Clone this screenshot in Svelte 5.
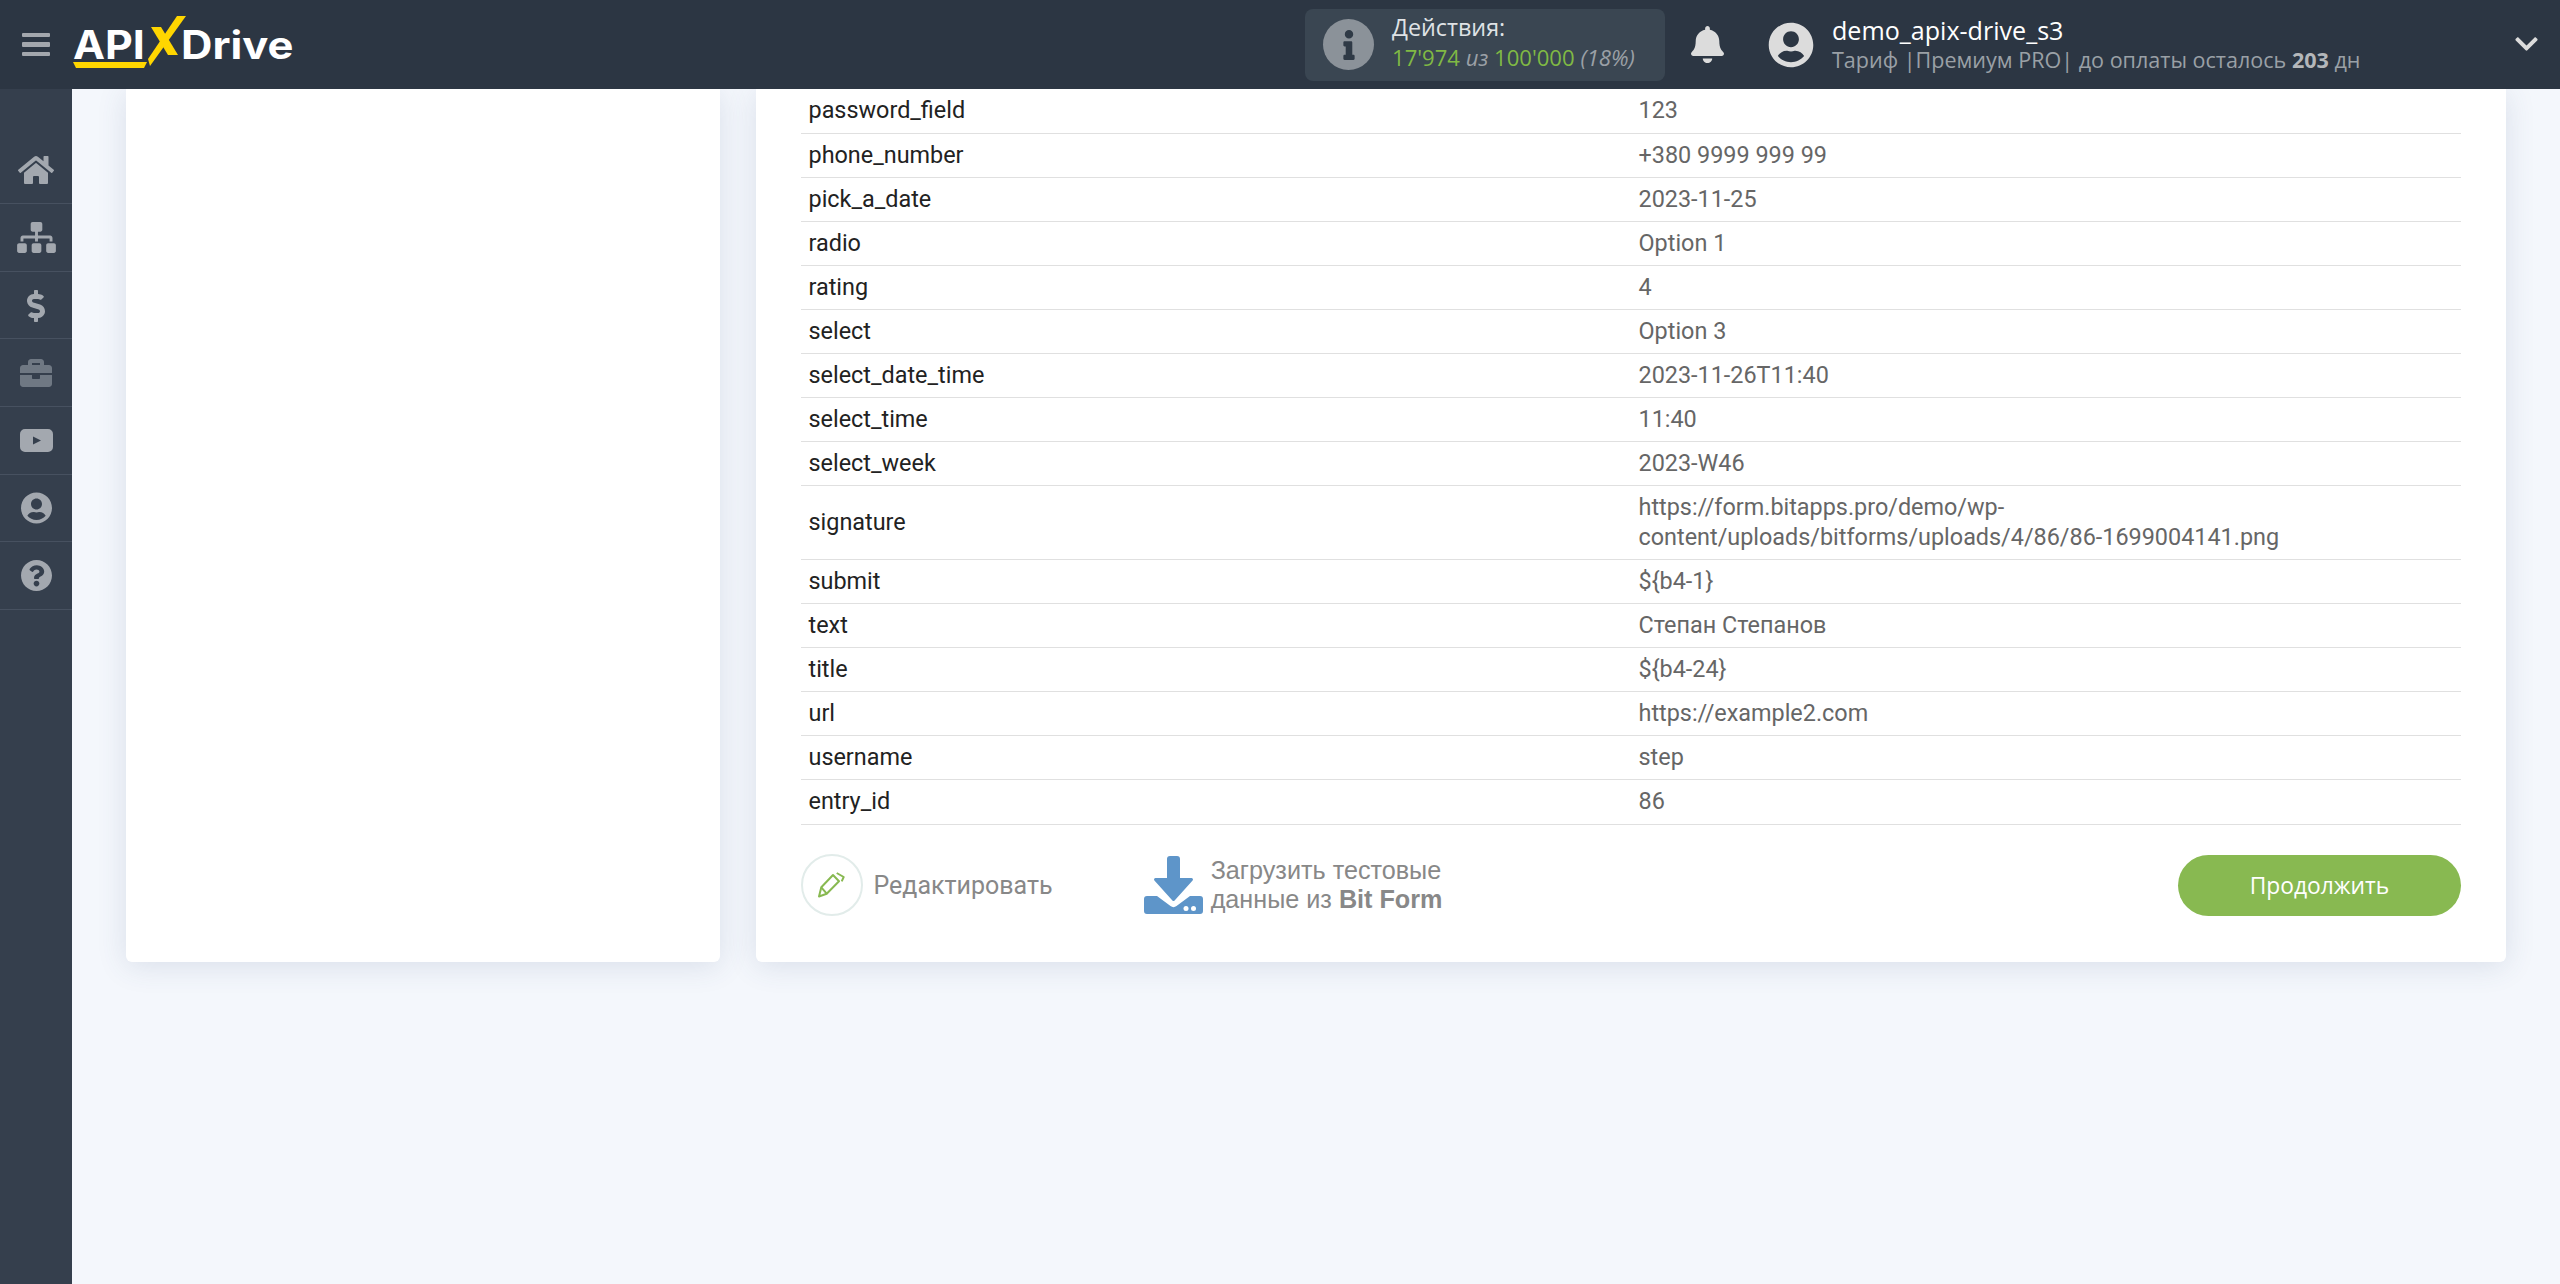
<script>
  const rows = [
    ['password_field', '123'],
    ['phone_number', '+380 9999 999 99'],
    ['pick_a_date', '2023-11-25'],
    ['radio', 'Option 1'],
    ['rating', '4'],
    ['select', 'Option 3'],
    ['select_date_time', '2023-11-26T11:40'],
    ['select_time', '11:40'],
    ['select_week', '2023-W46'],
    ['signature', 'https://form.bitapps.pro/demo/wp-\ncontent/uploads/bitforms/uploads/4/86/86-1699004141.png'],
    ['submit', '${b4-1}'],
    ['text', 'Степан Степанов'],
    ['title', '${b4-24}'],
    ['url', 'https://example2.com'],
    ['username', 'step'],
    ['entry_id', '86']
  ];
</script>

<div class="page">
  <header class="topbar">
    <button class="burger" aria-label="menu"><i></i><i></i><i></i></button>
    <div class="logo">
      <span class="api">API</span>
      <svg class="logo-x" viewBox="0 0 40 54" width="40" height="54" aria-hidden="true">
        <polygon points="4,11 14,11 31,39 21,39" fill="#ffd600"/>
        <polygon points="30,0 39,0 3,50 1,43" fill="#ffd600"/>
      </svg>
      <span class="drive">Drive</span>
      <svg class="logo-line" viewBox="0 0 74 7" width="74" height="7" aria-hidden="true">
        <polygon points="0,0 74,0 71,6 3,6" fill="#ffd600"/>
      </svg>
    </div>

    <div class="actions">
      <span class="info-disc">
        <svg viewBox="0 0 192 512" width="12" height="30" aria-hidden="true"><path fill="#2f3a46" d="M20 424.229h20V279.771H20c-11.046 0-20-8.954-20-20V212c0-11.046 8.954-20 20-20h112c11.046 0 20 8.954 20 20v212.229h20c11.046 0 20 8.954 20 20V492c0 11.046-8.954 20-20 20H20c-11.046 0-20-8.954-20-20v-47.771c0-11.046 8.954-20 20-20zM96 0C56.235 0 24 32.235 24 72s32.235 72 72 72 72-32.235 72-72S135.764 0 96 0z"/></svg>
      </span>
      <div class="actions-text">
        <div class="a-title">Действия:</div>
        <div class="a-count"><b>17'974</b> <em>из</em> <b>100'000</b> <em class="pct">(18%)</em></div>
      </div>
    </div>

    <svg class="bell" viewBox="0 0 448 512" width="33" height="37" preserveAspectRatio="none" aria-hidden="true"><path fill="#dcdcdc" d="M224 512c35.32 0 63.97-28.65 63.97-64H160.03c0 35.35 28.65 64 63.97 64zm215.39-149.71c-19.32-20.76-55.47-51.99-55.47-154.29 0-77.7-54.48-139.9-127.94-155.16V32c0-17.67-14.32-32-31.98-32s-31.98 14.33-31.98 32v20.84C118.56 68.1 64.08 130.3 64.08 208c0 102.3-36.15 133.53-55.47 154.29-6 6.45-8.66 14.16-8.61 21.71.11 16.4 12.98 32 32.1 32h383.8c19.12 0 32-15.6 32.1-32 .05-7.55-2.61-15.27-8.61-21.71z"/></svg>

    <svg class="avatar" viewBox="0 0 496 512" width="46" height="46" aria-hidden="true"><path fill="#dcdcdc" d="M248 8C111 8 0 119 0 256s111 248 248 248 248-111 248-248S385 8 248 8zm0 96c48.6 0 88 39.4 88 88s-39.4 88-88 88-88-39.4-88-88 39.4-88 88-88zm0 344c-58.7 0-111.3-26.6-146.5-68.2 18.8-35.4 55.6-59.8 98.5-59.8 2.4 0 4.8.4 7.1 1.1 13 4.2 26.6 6.9 40.9 6.9 14.3 0 28-2.7 40.9-6.9 2.3-.7 4.7-1.1 7.1-1.1 42.9 0 79.7 24.4 98.5 59.8C359.3 421.4 306.7 448 248 448z"/></svg>

    <div class="account">
      <div class="acc-name">demo_apix-drive_s3</div>
      <div class="acc-plan">Тариф |Премиум PRO| до оплаты осталось <b>203</b> дн</div>
    </div>

    <svg class="chev" viewBox="0 0 448 512" width="23" height="26" aria-hidden="true"><path fill="#dcdcdc" d="M207.029 381.476L12.686 187.132c-9.373-9.373-9.373-24.569 0-33.941l22.667-22.667c9.357-9.357 24.522-9.375 33.901-.04L224 284.505l154.745-154.021c9.379-9.335 24.544-9.317 33.901.04l22.667 22.667c9.373 9.373 9.373 24.569 0 33.941L240.971 381.476c-9.373 9.372-24.569 9.372-33.942 0z"/></svg>
  </header>

  <div class="body">
    <nav class="sidebar">
      <a class="item" href="#home" aria-label="home">
        <svg viewBox="0 0 576 512" width="36" height="32"><path d="M280.37 148.26L96 300.11V464a16 16 0 0 0 16 16l112.06-.29a16 16 0 0 0 15.92-16V368a16 16 0 0 1 16-16h64a16 16 0 0 1 16 16v95.64a16 16 0 0 0 16 16.05L464 480a16 16 0 0 0 16-16V300L295.67 148.26a12.19 12.19 0 0 0-15.3 0zM571.6 251.47L488 182.56V44.05a12 12 0 0 0-12-12h-56a12 12 0 0 0-12 12v72.61L318.47 43a48 48 0 0 0-61 0L4.34 251.47a12 12 0 0 0-1.6 16.9l25.5 31A12 12 0 0 0 45.15 301l235.22-193.74a12.19 12.19 0 0 1 15.3 0L530.9 301a12 12 0 0 0 16.9-1.6l25.5-31a12 12 0 0 0-1.7-16.93z"/></svg>
      </a>
      <a class="item" href="#flows" aria-label="flows">
        <svg viewBox="0 0 640 512" width="39" height="31"><path d="M128 352H32c-17.67 0-32 14.33-32 32v96c0 17.67 14.33 32 32 32h96c17.67 0 32-14.33 32-32v-96c0-17.67-14.33-32-32-32zm-24-80h192v48h48v-48h192v48h48v-57.59c0-21.17-17.23-38.41-38.41-38.41H344v-64h40c17.67 0 32-14.33 32-32V32c0-17.67-14.33-32-32-32H256c-17.67 0-32 14.33-32 32v96c0 17.67 14.33 32 32 32h40v64H94.41C73.23 224 56 241.23 56 262.41V320h48v-48zm264 80h-96c-17.67 0-32 14.33-32 32v96c0 17.67 14.33 32 32 32h96c17.67 0 32-14.33 32-32v-96c0-17.67-14.33-32-32-32zm240 0h-96c-17.67 0-32 14.33-32 32v96c0 17.67 14.33 32 32 32h96c17.67 0 32-14.33 32-32v-96c0-17.67-14.33-32-32-32z"/></svg>
      </a>
      <a class="item" href="#billing" aria-label="billing">
        <svg viewBox="0 0 288 512" width="18" height="32"><path d="M209.2 233.4l-108-31.6C88.7 198.2 80 186.5 80 173.5c0-16.3 13.2-29.5 29.5-29.5h66.3c12.2 0 24.2 3.7 34.2 10.5 6.1 4.1 14.3 3.1 19.5-2l34.8-34c7.1-6.9 6.1-18.4-1.8-24.5C238 74.8 207.4 64.1 176 64V16c0-8.8-7.2-16-16-16h-32c-8.8 0-16 7.2-16 16v48h-2.5C45.8 64-5.4 118.7.5 183.6c4.2 46.1 39.4 83.6 83.8 96.6l102.5 30c12.5 3.7 21.2 15.3 21.2 28.3 0 16.3-13.2 29.5-29.5 29.5h-66.3C100 368 88 364.3 78 357.5c-6.1-4.1-14.3-3.1-19.5 2l-34.8 34c-7.1 6.9-6.1 18.4 1.8 24.5 24.5 19.2 55.1 29.9 86.5 30v48c0 8.8 7.2 16 16 16h32c8.8 0 16-7.2 16-16v-48.2c46.6-.9 90.3-28.6 105.7-72.7 21.5-61.6-14.6-124.8-72.5-141.7z"/></svg>
      </a>
      <a class="item dim" href="#tools" aria-label="tools">
        <svg viewBox="0 0 512 512" width="32" height="32"><path d="M320 336c0 8.84-7.16 16-16 16h-96c-8.84 0-16-7.16-16-16v-48H0v144c0 25.6 22.4 48 48 48h416c25.6 0 48-22.4 48-48V288H320v48zm144-208h-80V80c0-25.6-22.4-48-48-48H176c-25.6 0-48 22.4-48 48v48H48c-25.6 0-48 22.4-48 48v80h512v-80c0-25.6-22.4-48-48-48zm-144 0H192V96h128v32z"/></svg>
      </a>
      <a class="item" href="#video" aria-label="video">
        <svg viewBox="0 0 33 23" width="33" height="23"><path fill-rule="evenodd" d="M5 0h23a5 5 0 0 1 5 5v13a5 5 0 0 1-5 5H5a5 5 0 0 1-5-5V5a5 5 0 0 1 5-5zM13 7.500v8l8-4z"/></svg>
      </a>
      <a class="item" href="#profile" aria-label="profile">
        <svg viewBox="0 0 496 512" width="31" height="32"><path d="M248 8C111 8 0 119 0 256s111 248 248 248 248-111 248-248S385 8 248 8zm0 96c48.6 0 88 39.4 88 88s-39.4 88-88 88-88-39.4-88-88 39.4-88 88-88zm0 344c-58.7 0-111.3-26.6-146.5-68.2 18.8-35.4 55.6-59.8 98.5-59.8 2.4 0 4.8.4 7.1 1.1 13 4.2 26.6 6.9 40.9 6.9 14.3 0 28-2.7 40.9-6.9 2.3-.7 4.7-1.1 7.1-1.1 42.9 0 79.7 24.4 98.5 59.8C359.3 421.4 306.7 448 248 448z"/></svg>
      </a>
      <a class="item" href="#help" aria-label="help">
        <svg viewBox="8 8 496 496" width="31" height="31"><path d="M504 256c0 136.997-111.043 248-248 248S8 392.997 8 256C8 119.083 119.043 8 256 8s248 111.083 248 248zM262.655 90c-54.497 0-89.255 22.957-116.549 63.758-3.536 5.286-2.353 12.415 2.715 16.258l34.699 26.31c5.205 3.947 12.621 3.008 16.665-2.122 17.864-22.658 30.113-35.797 57.303-35.797 20.429 0 45.698 13.148 45.698 32.958 0 14.976-12.363 22.667-32.534 33.976C247.128 238.528 216 254.941 216 296v4c0 6.627 5.373 12 12 12h56c6.627 0 12-5.373 12-12v-1.333c0-28.462 83.186-29.647 83.186-106.667 0-58.002-60.165-102-116.531-102zM256 338c-25.365 0-46 20.635-46 46 0 25.364 20.635 46 46 46s46-20.636 46-46c0-25.365-20.635-46-46-46z"/></svg>
      </a>
    </nav>

    <main class="content">
      <section class="card side"></section>
      <section class="card detail">
        <div class="table">
          {#each rows as r}
            <div class="row">
              <div class="key">{r[0]}</div>
              <div class="val">{r[1]}</div>
            </div>
          {/each}
        </div>
        <div class="footer">
          <button class="edit">
            <span class="edit-disc">
              <svg viewBox="0 0 28 26" width="28" height="26" aria-hidden="true">
                <g fill="none" stroke="#88b951" stroke-width="2" stroke-linejoin="round">
                  <path d="M1 24.500l2.300-9.200L15 3l6 6.200L8.700 21.700z"/>
                  <path d="M3.300 15.300l5.400 6.400"/>
                  <path d="M18.700 1l7 4-2 4.300"/>
                </g>
              </svg>
            </span>
            <span>Редактировать</span>
          </button>
          <button class="load">
            <svg viewBox="0 0 59 58" width="59" height="58" aria-hidden="true">
              <path fill="#5e95c9" d="M23 3a3 3 0 0 1 3-3h7a3 3 0 0 1 3 3v19h11.500a1.500 1.500 0 0 1 1.100 2.500L30.600 44.500a1.500 1.500 0 0 1-2.200 0L10.400 24.500a1.500 1.500 0 0 1 1.100-2.500H23z"/>
              <path fill="#5e95c9" d="M3 40h10l13.500 10a5 5 0 0 0 6 0L46 40h10a3 3 0 0 1 3 3v12a3 3 0 0 1-3 3H3a3 3 0 0 1-3-3V43a3 3 0 0 1 3-3z"/>
              <circle cx="42" cy="52.500" r="2.500" fill="#fff"/>
              <circle cx="49.500" cy="52.500" r="2.500" fill="#fff"/>
            </svg>
            <span class="load-text">Загрузить тестовые<br />данные из <b>Bit Form</b></span>
          </button>
          <button class="next">Продолжить</button>
        </div>
      </section>
    </main>
  </div>
</div>

<style>
  :global(body) {
    margin: 0;
    background: #f4f7fc;
  }
  .page {
    height: 1284px;
    display: flex;
    flex-direction: column;
    overflow: hidden;
    font-family: Roboto, sans-serif;
  }
  button {
    border: 0;
    background: none;
    padding: 0;
    cursor: pointer;
  }
  .topbar {
    height: 89px;
    flex: none;
    background: #2c3643;
    display: flex;
    align-items: center;
    color: #fff;
    font-family: "Open Sans", sans-serif;
    position: relative;
  }
  .burger {
    margin-left: 22px;
    width: 28px;
    display: flex;
    flex-direction: column;
    gap: 5px;
  }
  .burger i {
    display: block;
    height: 4.500px;
    border-radius: 1px;
    background: #a3a7ad;
  }
  .logo {
    margin-left: 23px;
    position: relative;
    width: 222px;
    height: 60px;
    display: flex;
    align-items: center;
    font-family: Inter, sans-serif;
    font-weight: 700;
    font-size: 39px;
    color: #fff;
  }
  .logo-x {
    position: absolute;
    left: 74px;
    top: 1px;
  }
  .logo-line {
    position: absolute;
    left: 0;
    top: 47px;
  }
  .api {
    width: 108px;
    display: inline-block;
    transform: scaleX(1.1);
    transform-origin: left center;
  }
  .drive {
    display: inline-block;
    transform: scaleX(1.115);
    transform-origin: left center;
  }
  .actions {
    margin-left: 1010px;
    width: 360px;
    height: 72px;
    box-sizing: border-box;
    background: #3a4652;
    border-radius: 8px;
    display: flex;
    align-items: center;
    padding-left: 18px;
    gap: 18px;
  }
  .info-disc {
    width: 51px;
    height: 51px;
    border-radius: 50%;
    background: #8b9299;
    display: flex;
    align-items: center;
    justify-content: center;
  }
  .actions-text {
    padding-bottom: 5px;
  }
  .a-title {
    font-size: 23.300px;
    line-height: 30px;
    color: #dfe2e5;
  }
  .a-count {
    font-size: 22.100px;
    line-height: 30px;
    color: #9aa0a6;
  }
  .a-count b {
    font-weight: 400;
    color: #80b944;
  }
  .a-count em {
    font-style: italic;
  }
  .bell {
    margin-left: 26px;
  }
  .avatar {
    margin-left: 44px;
  }
  .account {
    margin-left: 18px;
    width: 680px;
  }
  .acc-name {
    font-size: 25.100px;
    line-height: 31px;
    color: #fff;
  }
  .acc-plan {
    font-size: 21.550px;
    line-height: 28px;
    color: #9aa0a6;
  }
  .acc-plan b {
    color: #b4b7ba;
  }
  .chev {
    position: absolute;
    left: 2515px;
    top: 31px;
  }
  .body {
    flex: 1;
    display: flex;
    min-height: 0;
  }
  .sidebar {
    width: 72px;
    flex: none;
    background: #353f4d;
    padding-top: 47.600px;
    box-sizing: border-box;
  }
  .item {
    height: 67.600px;
    box-sizing: border-box;
    border-bottom: 1px solid #475160;
    padding-top: 1px;
    display: flex;
    align-items: center;
    justify-content: center;
  }
  .item svg {
    fill: #a3a8af;
  }
  .item.dim svg {
    fill: #6f7883;
  }
  .content {
    flex: 1;
    display: flex;
    gap: 36px;
    align-items: flex-start;
    padding: 0 54px;
  }
  .card {
    background: #fff;
    height: 873px;
    border-radius: 0 0 6px 6px;
    box-shadow: 0 4px 30px rgba(60, 80, 120, 0.14);
  }
  .side {
    width: 594px;
    flex: none;
  }
  .detail {
    flex: 1;
    box-sizing: border-box;
    padding: 0.600px 45px 0;
  }
  .row {
    display: grid;
    grid-template-columns: 829px 1fr;
    align-items: center;
    padding: 6.850px 0;
    border-bottom: 1px solid #e0e0e0;
    font-size: 23.400px;
    line-height: 29.400px;
  }
  .key {
    padding-left: 7.500px;
    color: #222;
  }
  .val {
    padding-left: 8.500px;
    color: #666;
    white-space: pre-line;
  }
  .footer {
    position: relative;
    display: flex;
    align-items: center;
    padding-top: 29.700px;
  }
  .edit {
    display: flex;
    align-items: center;
    gap: 10.500px;
    font-family: Roboto, sans-serif;
    font-size: 25px;
    color: #888;
  }
  .edit-disc {
    width: 62px;
    height: 62px;
    box-sizing: border-box;
    border: 2.500px solid #e2ecea;
    border-radius: 50%;
    display: flex;
    align-items: center;
    justify-content: center;
  }
  .load {
    margin-left: 91px;
    display: flex;
    align-items: center;
    gap: 8px;
    text-align: left;
    font-family: "Liberation Sans", sans-serif;
    font-size: 25.200px;
    line-height: 29px;
    color: #888;
  }
  .next {
    margin-left: auto;
    width: 283px;
    height: 61px;
    border-radius: 31px;
    background: #88b951;
    color: #fff;
    font-family: "Open Sans", sans-serif;
    font-size: 22.800px;
  }
</style>
